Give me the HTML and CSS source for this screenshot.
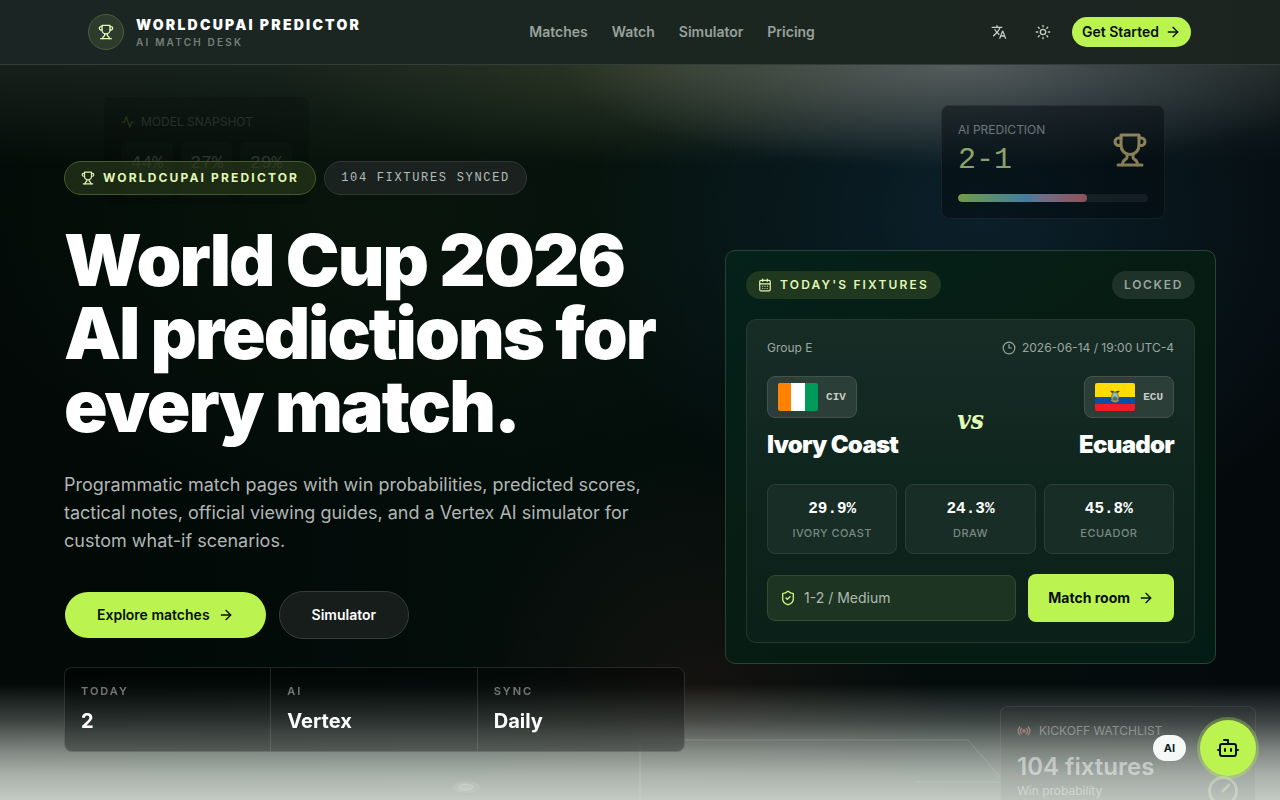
FILE: index.html
```html
<!DOCTYPE html>
<html lang="en">
<head>
  <meta charset="UTF-8">
  <meta name="viewport" content="width=device-width, initial-scale=1.0">
  <title>WorldCupAI Predictor</title>
  <link rel="stylesheet" href="styles.css">
</head>
<body>
  <svg class="sprite" aria-hidden="true">
    <symbol id="trophy" viewBox="0 0 24 24">
      <path d="M6 9H4.5a2.5 2.5 0 0 1 0-5H6"/><path d="M18 9h1.5a2.5 2.5 0 0 0 0-5H18"/><path d="M4 22h16"/>
      <path d="M10 14.66V17c0 .55-.47.98-.97 1.21C7.85 18.75 7 20.24 7 22"/>
      <path d="M14 14.66V17c0 .55.47.98.97 1.21C16.15 18.75 17 20.24 17 22"/>
      <path d="M18 2H6v7a6 6 0 0 0 12 0V2Z"/>
    </symbol>
    <symbol id="arrow" viewBox="0 0 24 24"><path d="M5 12h14"/><path d="m12 5 7 7-7 7"/></symbol>
  </svg>

  <header class="header">
    <div class="header-inner">
      <a class="brand" href="#">
        <span class="brand-mark"><svg class="icon" width="16" height="16"><use href="#trophy"/></svg></span>
        <span class="brand-text">
          <span class="brand-name">WORLDCUPAI PREDICTOR</span>
          <span class="brand-sub">AI MATCH DESK</span>
        </span>
      </a>
      <nav class="nav">
        <a href="#">Matches</a>
        <a href="#">Watch</a>
        <a href="#">Simulator</a>
        <a href="#">Pricing</a>
      </nav>
      <div class="header-actions">
        <button class="icon-btn" type="button" aria-label="Language">
          <svg width="16" height="16" viewBox="0 0 24 24" fill="currentColor"><path d="m12.87 15.07-2.54-2.51.03-.03A17.52 17.52 0 0 0 14.07 6H17V4h-7V2H8v2H1v2h11.17C11.5 7.92 10.44 9.75 9 11.35 8.07 10.32 7.3 9.19 6.69 8h-2c.73 1.63 1.73 3.17 2.98 4.56l-5.09 5.02L4 19l5-5 3.11 3.11.76-2.04zM18.5 10h-2L12 22h2l1.12-3h4.75L21 22h2l-4.5-12zm-2.62 7 1.62-4.33L19.12 17h-3.24z"/></svg>
        </button>
        <button class="icon-btn" type="button" aria-label="Theme">
          <svg class="icon" width="16" height="16" viewBox="0 0 24 24"><circle cx="12" cy="12" r="4"/><path d="M12 2v2M12 20v2M4.93 4.93l1.41 1.41M17.66 17.66l1.41 1.41M2 12h2M20 12h2M6.34 17.66l-1.41 1.41M19.07 4.93l-1.41 1.41"/></svg>
        </button>
        <a class="btn btn-small" href="#">Get Started <svg class="icon" width="16" height="16"><use href="#arrow"/></svg></a>
      </div>
    </div>
  </header>

  <main class="hero">
    <!-- floating decoration behind the content -->
    <div class="float snapshot" aria-hidden="true">
      <div class="float-label">
        <svg class="icon" width="14" height="14" viewBox="0 0 24 24"><path d="M22 12h-4l-3 9L9 3l-3 9H2"/></svg>
        MODEL SNAPSHOT
      </div>
      <div class="snapshot-grid"><span>44%</span><span>27%</span><span>29%</span></div>
    </div>
    <div class="float prediction" aria-hidden="true">
      <div class="prediction-top">
        <div>
          <div class="float-label">AI PREDICTION</div>
          <div class="prediction-score">2-1</div>
        </div>
        <svg class="icon" width="36" height="36"><use href="#trophy"/></svg>
      </div>
      <div class="meter"><div class="meter-fill"></div></div>
    </div>
    <div class="fade"></div>
    <svg class="pitch" viewBox="0 0 1280 120" width="1280" height="120" aria-hidden="true">
      <path d="M640 60v60M640 60H968L1000 97M915 102H1000"/>
      <ellipse cx="466" cy="107" rx="14" ry="6"/>
      <ellipse class="dot" cx="466" cy="107" rx="7" ry="3"/>
    </svg>
    <div class="float watchlist" aria-hidden="true">
      <div class="float-label">
        <svg class="icon" width="14" height="14" viewBox="0 0 24 24"><path d="M4.9 19.1C1 15.2 1 8.8 4.9 4.9M7.8 16.2c-2.3-2.3-2.3-6.1 0-8.5M16.2 7.8c2.3 2.3 2.3 6.1 0 8.5M19.1 4.9C23 8.8 23 15.1 19.1 19"/><circle cx="12" cy="12" r="2"/></svg>
        KICKOFF WATCHLIST
      </div>
      <div class="watchlist-count">104 fixtures</div>
      <div class="watchlist-row">Win probability
        <svg class="icon" width="36" height="36" viewBox="0 0 24 24"><circle cx="12" cy="12" r="9"/><path d="m12 12 4-4"/></svg>
      </div>
    </div>

    <div class="container">
      <section class="intro">
        <div class="badges">
          <span class="badge badge-lime"><svg class="icon" width="14" height="14"><use href="#trophy"/></svg>WORLDCUPAI PREDICTOR</span>
          <span class="badge badge-mono">104 FIXTURES SYNCED</span>
        </div>
        <h1>World Cup 2026 AI predictions for every match.</h1>
        <p class="lead">Programmatic match pages with win probabilities, predicted scores, tactical notes, official viewing guides, and a Vertex AI simulator for custom what-if scenarios.</p>
        <div class="actions">
          <a class="btn btn-large" href="#">Explore matches <svg class="icon" width="16" height="16"><use href="#arrow"/></svg></a>
          <a class="btn btn-large btn-ghost" href="#">Simulator</a>
        </div>
        <dl class="stats">
          <div><dt>TODAY</dt><dd>2</dd></div>
          <div><dt>AI</dt><dd>Vertex</dd></div>
          <div><dt>SYNC</dt><dd>Daily</dd></div>
        </dl>
      </section>

      <section class="fixtures">
        <div class="fixtures-head">
          <h2 class="pill pill-lime">
            <svg class="icon" width="14" height="14" viewBox="0 0 24 24"><path d="M8 2v4M16 2v4M3 10h18M8 14h.01M12 14h.01M16 14h.01M8 18h.01M12 18h.01M16 18h.01"/><rect x="3" y="4" width="18" height="18" rx="2"/></svg>
            TODAY'S FIXTURES
          </h2>
          <span class="pill">LOCKED</span>
        </div>
        <article class="match">
          <div class="match-meta">
            <span>Group E</span>
            <span class="match-time"><svg class="icon" width="14" height="14" viewBox="0 0 24 24"><circle cx="12" cy="12" r="10"/><path d="M12 6v6h4"/></svg>2026-06-14 / 19:00 UTC-4</span>
          </div>
          <div class="teams">
            <div class="team">
              <span class="flag-box">
                <svg class="flag" width="40" height="28" viewBox="0 0 40 28"><path fill="#ff8200" d="M0 0h13v28H0z"/><path fill="#fff" d="M13 0h14v28H13z"/><path fill="#009a5b" d="M27 0h13v28H27z"/></svg>
                CIV
              </span>
              <h3>Ivory Coast</h3>
            </div>
            <span class="versus">vs</span>
            <div class="team team-away">
              <span class="flag-box">
                <svg class="flag" width="40" height="28" viewBox="0 0 40 28"><path fill="#ffdd00" d="M0 0h40v14H0z"/><path fill="#0b4ea2" d="M0 14h40v7H0z"/><path fill="#ee1c25" d="M0 21h40v7H0z"/><path d="M15 8q3-1 5 1 2-2 5-1-2 3-5 2-3 1-5-2z" fill="#4b4a28"/><ellipse cx="20" cy="14" rx="4" ry="5" fill="#8c8a45"/><ellipse cx="20" cy="13.500" rx="2.500" ry="3.500" fill="#86c2dd"/><path d="M18 15l2-2 2 2v2h-4z" fill="#3d7a54"/><path d="M16 17q4 4 8 0" fill="none" stroke="#b9a03e"/></svg>
                ECU
              </span>
              <h3>Ecuador</h3>
            </div>
          </div>
          <div class="odds">
            <div><strong>29.9%</strong><span>IVORY COAST</span></div>
            <div><strong>24.3%</strong><span>DRAW</span></div>
            <div><strong>45.8%</strong><span>ECUADOR</span></div>
          </div>
          <div class="match-foot">
            <div class="pick"><svg class="icon" width="16" height="16" viewBox="0 0 24 24"><path d="M20 13c0 5-3.500 7.500-7.660 8.950a1 1 0 0 1-.67-.01C7.500 20.500 4 18 4 13V6a1 1 0 0 1 1-1c2 0 4.500-1.200 6.240-2.720a1.170 1.170 0 0 1 1.520 0C14.510 3.810 17 5 19 5a1 1 0 0 1 1 1z"/><path d="m9 12 2 2 4-4"/></svg>1-2 / Medium</div>
            <a class="btn btn-room" href="#">Match room <svg class="icon" width="16" height="16"><use href="#arrow"/></svg></a>
          </div>
        </article>
      </section>
    </div>
  </main>

  <div class="assistant">
    <span class="assistant-tag">AI</span>
    <button class="assistant-btn" type="button" aria-label="Open AI assistant">
      <svg class="icon" width="24" height="24" viewBox="0 0 24 24"><path d="M12 8V4H8M2 14h2M20 14h2M15 13v2M9 13v2"/><rect x="4" y="8" width="16" height="12" rx="2"/></svg>
    </button>
  </div>
</body>
</html>
```

FILE: styles.css
```css
:root {
  --lime: #bbf451;
  --lime-soft: #e2f7b5;
  --ink: #061009;
  --line: rgba(255, 255, 255, 0.12);
  --mono: "Liberation Mono", monospace;
}
* {
  box-sizing: border-box;
}
body {
  margin: 0;
  min-height: 100vh;
  display: flex;
  flex-direction: column;
  background: #020a08;
  color: #fff;
  font-family: Inter, sans-serif;
  font-size: 14px;
  line-height: 20px;
}
a {
  color: inherit;
  text-decoration: none;
}
h1, h2, h3, p, dl, dd {
  margin: 0;
}
.sprite {
  position: absolute;
  width: 0;
  height: 0;
}
.icon {
  fill: none;
  stroke: currentColor;
  stroke-width: 2;
  stroke-linecap: round;
  stroke-linejoin: round;
  flex-shrink: 0;
}

/* header */
.header {
  background: linear-gradient(90deg, #1b2523, #1b2621 60%, #1c2420);
  border-bottom: 1px solid #343e39;
}
.header-inner {
  display: flex;
  justify-content: space-between;
  align-items: center;
  max-width: 1152px;
  height: 64px;
  margin: 0 auto;
  padding: 0 24px;
}
.brand {
  display: flex;
  align-items: center;
  gap: 12px;
}
.brand-mark {
  display: grid;
  place-items: center;
  width: 36px;
  height: 36px;
  border: 1px solid #4c5f3b;
  border-radius: 50%;
  background: #2c3b2b;
  color: var(--lime-soft);
}
.brand-text {
  display: flex;
  flex-direction: column;
}
.brand-name {
  font-size: 14px;
  font-weight: 900;
  line-height: 20px;
  letter-spacing: 0.16em;
}
.brand-sub {
  color: #75807a;
  font-size: 10px;
  font-weight: 600;
  line-height: 15px;
  letter-spacing: 0.22em;
}
.nav {
  display: flex;
  gap: 24px;
  color: #98a19b;
  font-weight: 600;
}
.header-actions {
  display: flex;
  justify-content: flex-end;
  align-items: center;
  gap: 12px;
}
.icon-btn {
  display: grid;
  place-items: center;
  width: 32px;
  height: 32px;
  padding: 0;
  border: 0;
  background: none;
  color: #c9cfcb;
}

/* buttons */
.btn {
  display: inline-flex;
  align-items: center;
  justify-content: center;
  gap: 8px;
  border: 1px solid transparent;
  border-radius: 24px;
  background: var(--lime) padding-box;
  color: var(--ink);
  font-weight: 600;
}
.btn-small {
  gap: 6px;
  height: 32px;
  padding: 0 10px;
}
.btn-large {
  height: 48px;
  padding: 0 32px;
}
.btn-ghost {
  border-color: #353c39;
  background: #161d1b;
  color: #fff;
}
.btn-room {
  height: 48px;
  padding: 0 19px;
  border-radius: 8px;
  background: var(--lime);
  font-weight: 700;
}

/* hero */
.hero {
  position: relative;
  flex: 1;
  overflow: hidden;
  padding: 96px 64px 48px;
  background:
    radial-gradient(400px 105px at 960px 0, rgba(135, 138, 145, 0.5), transparent),
    radial-gradient(420px 100px at 690px 0, rgba(90, 100, 55, 0.32), transparent),
    linear-gradient(rgba(40, 50, 44, 0.55), transparent 100px),
    radial-gradient(400px 330px at 980px 150px, rgba(18, 48, 68, 0.55), transparent),
    radial-gradient(240px 240px at 700px 630px, rgba(60, 30, 28, 0.3), transparent),
    radial-gradient(500px 300px at 380px 140px, rgba(16, 34, 16, 0.4), transparent),
    linear-gradient(90deg, #020907, #030e0b 50%, #040a0c);
}
.container {
  position: relative;
  display: grid;
  grid-template-columns: 1.265fr 1fr;
  align-items: center;
  gap: 40px;
  max-width: 1152px;
  margin: 0 auto;
}
.fade {
  position: absolute;
  inset: auto 0 0;
  height: 116px;
  background: linear-gradient(rgba(205, 213, 206, 0), rgba(205, 213, 206, 0.29) 32%, rgba(205, 213, 206, 0.62) 58%, rgba(205, 213, 206, 0.82) 78%, rgba(205, 213, 206, 0.95));
}
.pitch {
  position: absolute;
  left: 0;
  bottom: 0;
  fill: none;
  stroke: rgba(225, 240, 230, 0.2);
}
.pitch ellipse {
  fill: rgba(255, 255, 255, 0.1);
  stroke: none;
}
.pitch .dot {
  stroke: rgba(255, 255, 255, 0.2);
}
.badges {
  display: flex;
  gap: 8px;
}
.badge {
  display: flex;
  align-items: center;
  gap: 8px;
  height: 34px;
  padding: 0 16px;
  border: 1px solid #2f3733;
  border-radius: 17px;
  background: rgba(29, 36, 33, 0.9);
  font-size: 12px;
  line-height: 16px;
}
.badge-lime {
  border-color: #45582f;
  background: rgba(44, 62, 28, 0.6);
  color: var(--lime-soft);
  font-weight: 700;
  letter-spacing: 0.18em;
}
.badge-mono {
  color: #b6bcb9;
  font-family: var(--mono);
  letter-spacing: 0.14em;
}
h1 {
  margin-top: 28px;
  font-size: 72px;
  font-weight: 900;
  line-height: 73px;
  letter-spacing: -2px;
}
.lead {
  max-width: 600px;
  margin-top: 29px;
  color: #b1b6b4;
  font-size: 18px;
  line-height: 28px;
}
.actions {
  display: flex;
  gap: 12px;
  margin-top: 36px;
}
.stats {
  display: grid;
  grid-template-columns: repeat(3, 1fr);
  overflow: hidden;
  margin-top: 28px;
  border: 1px solid var(--line);
  border-radius: 8px;
  background: rgba(0, 0, 0, 0.3);
  backdrop-filter: blur(8px);
}
.stats div {
  padding: 16px;
}
.stats div:not(:last-child) {
  border-right: 1px solid var(--line);
}
.stats dt {
  color: rgba(255, 255, 255, 0.42);
  font-size: 11px;
  font-weight: 600;
  line-height: 15px;
  letter-spacing: 0.18em;
}
.stats dd {
  margin-top: 8px;
  font-size: 20px;
  font-weight: 700;
  line-height: 28px;
}

/* fixture card */
.fixtures {
  padding: 20px;
  border: 1px solid #264530;
  border-radius: 10px;
  background: linear-gradient(145deg, #04211a, #071c12 50%, #031c15);
}
.fixtures-head {
  display: flex;
  justify-content: space-between;
}
.pill {
  display: flex;
  align-items: center;
  gap: 8px;
  height: 28px;
  padding: 0 12px;
  border-radius: 14px;
  background: #1f3229;
  color: #98a59e;
  font-size: 12px;
  font-weight: 600;
  line-height: 16px;
  letter-spacing: 0.14em;
}
.pill-lime {
  background: #203820;
  color: var(--lime-soft);
  letter-spacing: 0.18em;
}
.match {
  margin-top: 20px;
  padding: 20px;
  border: 1px solid #233a31;
  border-radius: 10px;
  background: linear-gradient(#182c26, #0f261f 45%, #0a2019);
}
.match-meta {
  display: flex;
  justify-content: space-between;
  color: #9ba7a1;
  font-size: 12px;
  line-height: 16px;
}
.match-time {
  display: flex;
  align-items: center;
  gap: 6px;
}
.teams {
  display: grid;
  grid-template-columns: 1fr auto 1fr;
  align-items: center;
  margin-top: 20px;
}
.team {
  display: flex;
  flex-direction: column;
  align-items: flex-start;
  gap: 12px;
}
.team-away {
  align-items: flex-end;
}
.flag-box {
  display: flex;
  align-items: center;
  gap: 8px;
  height: 42px;
  padding: 0 10px;
  border: 1px solid #43534c;
  border-radius: 8px;
  background: #2b3e37;
  color: #c5ceca;
  font-family: var(--mono);
  font-size: 11px;
  font-weight: 700;
}
.flag {
  border-radius: 2px;
}
.team h3 {
  font-size: 24px;
  font-weight: 900;
  line-height: 30px;
  letter-spacing: -0.03em;
}
.versus {
  padding-top: 4px;
  color: #e4fbb5;
  font-family: "DejaVu Serif Condensed", "DejaVu Serif", serif;
  font-size: 26px;
  font-style: italic;
  font-weight: 700;
  line-height: 36px;
}
.odds {
  display: grid;
  grid-template-columns: repeat(3, 1fr);
  gap: 8px;
  margin-top: 24px;
}
.odds div {
  display: flex;
  flex-direction: column;
  gap: 4px;
  padding: 12px;
  border: 1px solid #293e36;
  border-radius: 8px;
  background: #182d26;
  text-align: center;
}
.odds strong {
  font-family: var(--mono);
  font-size: 16px;
  line-height: 24px;
}
.odds span {
  color: #7a8983;
  font-size: 11px;
  font-weight: 500;
  line-height: 16px;
  letter-spacing: 0.04em;
}
.match-foot {
  display: grid;
  grid-template-columns: 1fr auto;
  align-items: center;
  gap: 12px;
  margin-top: 20px;
}
.pick {
  display: flex;
  align-items: center;
  gap: 8px;
  height: 46px;
  padding: 0 12px;
  border: 1px solid #344a31;
  border-radius: 8px;
  background: #1e3423;
  color: #aeb9b0;
}
.pick .icon {
  color: #cdf783;
}

/* decoration cards */
.float {
  position: absolute;
  border: 1px solid rgba(255, 255, 255, 0.16);
  border-radius: 8px;
  background: rgba(4, 10, 14, 0.8);
}
.float-label {
  display: flex;
  align-items: center;
  gap: 8px;
  color: #b5b9bb;
  font-size: 12px;
  line-height: 16px;
}
.snapshot {
  top: 32px;
  left: 104px;
  width: 205px;
  height: 107px;
  padding: 16px;
  border-color: transparent;
  background: #000;
  opacity: 0.14;
}
.snapshot .float-label {
  gap: 6px;
}
.snapshot .icon {
  color: var(--lime);
}
.snapshot-grid {
  display: grid;
  grid-template-columns: repeat(3, 1fr);
  gap: 8px;
  margin-top: 12px;
  font-family: var(--mono);
  font-size: 18px;
  text-align: center;
}
.snapshot-grid span {
  height: 56px;
  padding-top: 11px;
  border-radius: 6px;
  background: rgba(255, 255, 255, 0.08);
}
.prediction {
  top: 40px;
  right: 115px;
  width: 224px;
  height: 114px;
  padding: 16px;
  border-color: rgba(255, 255, 255, 0.1);
  opacity: 0.6;
}
.prediction .float-label {
  color: #9da1a5;
}
.prediction-top {
  display: flex;
  align-items: center;
  justify-content: space-between;
}
.prediction-top .icon {
  color: #dcc27a;
}
.prediction-score {
  margin-top: 4px;
  color: #ddf698;
  font-family: var(--mono);
  font-size: 30px;
  line-height: 36px;
}
.meter {
  overflow: hidden;
  height: 8px;
  margin-top: 16px;
  border-radius: 4px;
  background: rgba(255, 255, 255, 0.1);
}
.meter-fill {
  width: 68%;
  height: 100%;
  border-radius: 4px;
  background: linear-gradient(90deg, #b8ef54, #68bef0 52%, #b2a4c4 66%, #e87880);
}
.watchlist {
  right: 24px;
  bottom: -40px;
  width: 256px;
  height: 134px;
  padding: 16px;
  border-color: rgba(255, 255, 255, 0.08);
  background: rgba(60, 60, 60, 0.06);
}
.watchlist .float-label {
  color: rgba(255, 255, 255, 0.36);
}
.watchlist .float-label .icon {
  color: #ab8684;
}
.watchlist-count {
  margin-top: 12px;
  color: rgba(255, 255, 255, 0.48);
  font-size: 24px;
  font-weight: 600;
  line-height: 32px;
}
.watchlist-row {
  display: flex;
  justify-content: space-between;
  align-items: center;
  height: 16px;
  color: rgba(255, 255, 255, 0.4);
  font-size: 12px;
  line-height: 16px;
}
.watchlist-row .icon {
  margin-right: -2px;
  color: rgba(235, 250, 215, 0.35);
}

/* assistant launcher */
.assistant {
  position: fixed;
  right: 24px;
  bottom: 24px;
  display: flex;
  align-items: center;
  gap: 14px;
}
.assistant-tag {
  padding: 5px 11px;
  border-radius: 13px;
  background: #f6f8f8;
  color: #0c211d;
  font-size: 11px;
  font-weight: 700;
  line-height: 16px;
}
.assistant-btn {
  display: grid;
  place-items: center;
  width: 56px;
  height: 56px;
  padding: 0;
  border: 0;
  border-radius: 50%;
  background: var(--lime);
  color: var(--ink);
  box-shadow: 0 0 0 3px rgba(190, 248, 83, 0.3);
}
```
